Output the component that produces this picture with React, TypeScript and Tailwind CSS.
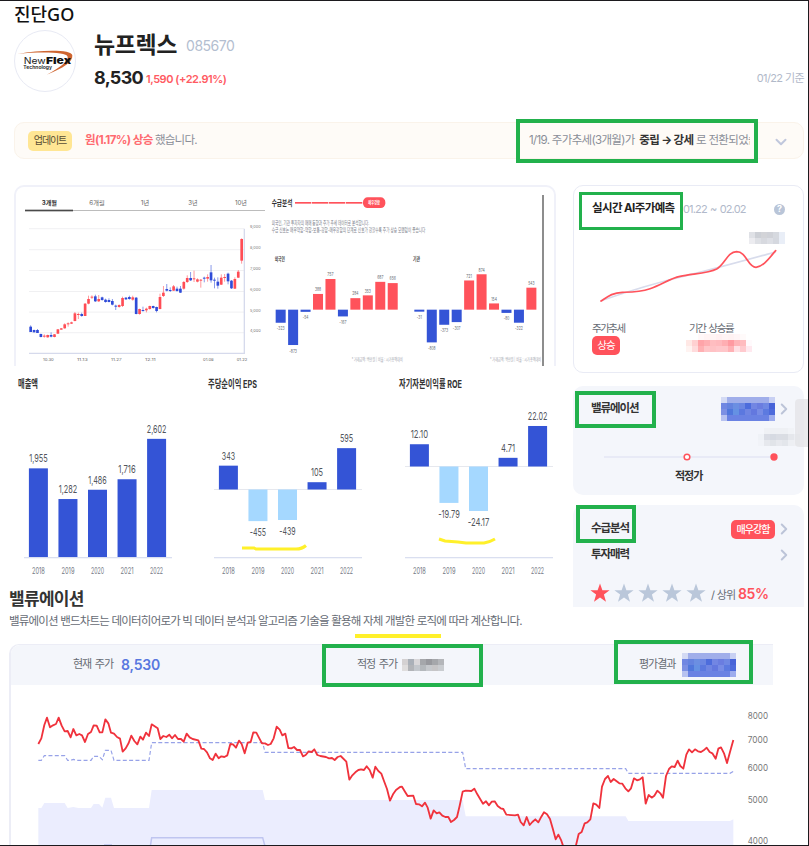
import type { ReactNode } from 'react'
import { ChevronDown, ChevronRight } from 'lucide-react'

const BLUE = '#3454d6'
const RED = '#ff525b'

// [top, bottom, wickTop, wickBottom, up]
const candles: [number, number, number, number, 0 | 1][] = [
  [440, 456, 436, 456, 0], [450, 457, 449, 457, 0], [450, 459, 447, 459, 0], [462, 471, 461, 472, 0],
  [467, 470, 463, 473, 1], [465, 472, 464, 473, 1], [465, 470, 457, 472, 0], [463, 471, 462, 472, 1],
  [448, 461, 447, 462, 1], [445, 449, 444, 449, 1], [433, 445, 430, 446, 1], [430, 432, 427, 440, 1],
  [427, 431, 425, 432, 1], [400, 423, 396, 424, 1], [402, 405, 398, 417, 1], [402, 408, 398, 410, 0],
  [371, 408, 369, 408, 1], [357, 371, 347, 373, 1], [350, 353, 346, 357, 1], [349, 364, 344, 366, 0],
  [357, 364, 345, 366, 1], [352, 360, 350, 362, 0], [359, 366, 356, 368, 0], [360, 366, 355, 367, 0],
  [363, 374, 357, 376, 0], [377, 380, 374, 390, 0], [375, 381, 373, 383, 1], [354, 378, 350, 381, 1],
  [353, 358, 351, 360, 0], [351, 357, 347, 359, 0], [352, 359, 347, 362, 1], [353, 402, 351, 403, 0],
  [387, 402, 386, 404, 1], [390, 393, 380, 395, 0], [386, 391, 383, 397, 1], [378, 387, 377, 389, 1],
  [378, 384, 377, 386, 0], [381, 393, 380, 397, 0], [351, 387, 341, 388, 1], [338, 348, 318, 351, 1],
  [327, 332, 312, 334, 0], [330, 333, 322, 336, 0], [319, 332, 315, 333, 1], [326, 333, 320, 335, 0],
  [326, 338, 318, 339, 0], [306, 326, 303, 329, 1], [294, 306, 286, 309, 1], [294, 301, 276, 303, 0],
  [295, 298, 272, 306, 1], [298, 305, 295, 307, 1], [299, 302, 297, 323, 1], [293, 295, 290, 307, 0],
  [291, 296, 283, 305, 1], [277, 301, 255, 308, 0], [299, 302, 293, 325, 0], [305, 317, 292, 326, 0],
  [293, 314, 283, 315, 1], [291, 293, 282, 305, 1], [281, 304, 278, 313, 0], [302, 325, 300, 327, 0],
  [297, 326, 292, 327, 1], [275, 293, 270, 294, 1], [177, 242, 175, 251, 1],
]

const pricePath =
  '115,177 124,160 133,120 141,98 150,127 159,121 168,117 176,98 185,122 194,139 203,138 212,157 220,132 229,151 238,147 246,151 255,171 264,147 273,141 281,121 290,122 299,142 307,142 316,103 325,115 333,143 342,146 351,156 360,161 368,200 377,190 386,174 394,152 403,168 412,178 421,155 429,164 438,143 447,153 455,118 464,124 473,130 481,162 490,153 499,156 508,149 516,160 525,150 534,162 543,162 551,170 560,146 569,157 578,162 595,166 604,191 612,192 621,202 630,220 638,225 647,206 656,220 664,214 673,216 682,211 691,177 699,178 708,188 717,167 725,177 734,205 743,173 752,171 760,142 769,143 778,160 786,175 795,175 804,180 812,177 821,160 830,125 839,134 847,151 856,146 865,189 874,190 882,186 891,195 900,195 909,214 917,210 926,199 935,201 943,193 952,210 961,213 978,216 987,220 996,219 1004,225 1013,216 1022,213 1039,230 1048,284 1057,271 1066,262 1075,255 1083,253 1092,255 1100,244 1109,255 1118,278 1126,245 1135,258 1144,266 1152,288 1161,312 1170,347 1179,328 1188,315 1200,306 1206,305 1215,320 1223,333 1240,332 1248,357 1257,358 1266,364 1275,353 1283,368 1292,401 1301,376 1310,385 1318,382 1327,392 1336,396 1345,396 1353,411 1362,405 1371,396 1379,362 1388,320 1397,317 1414,318 1423,311 1432,328 1440,341 1449,356 1458,349 1467,361 1475,350 1484,349 1493,363 1502,370 1510,372 1519,389 1545,391 1554,389 1562,411 1571,421 1580,396 1589,420 1597,411 1606,403 1615,412 1624,395 1632,382 1641,388 1650,402 1658,430 1667,463 1675,449 1684,467 1690,485 1727,485 1736,447 1745,441 1754,415 1762,412 1771,403 1780,355 1789,359 1798,369 1806,305 1815,282 1824,273 1832,291 1841,282 1850,289 1858,295 1867,296 1876,310 1885,319 1893,310 1902,280 1911,286 1920,283 1928,277 1937,356 1946,330 1955,338 1963,332 1972,317 1981,325 1989,338 1998,273 2007,252 2015,244 2024,246 2033,227 2041,243 2050,251 2059,209 2067,193 2076,202 2085,193 2094,199 2103,201 2111,196 2120,188 2129,201 2137,205 2147,221 2155,191 2163,187 2172,205 2181,234 2190,201 2200,165'

const fairPath =
  '115,226 124,226 133,212 194,212 203,226 212,226 220,223 229,226 273,226 281,214 297,214 307,224 316,196 333,196 342,226 447,226 455,173 788,173 795,202 1388,202 1397,251 1877,251 1885,265 2190,265 2200,259'

const bandPath =
  '115,369 124,369 133,354 194,354 203,369 220,366 235,369 273,369 281,357 297,357 307,368 316,338 333,338 342,369 447,369 455,315 788,315 795,345 1388,345 1397,394 1877,394 1885,408 2190,408 2200,403 2200,485 115,485'

type LabelProps = { x: number; y: number; w: number; size: number; fill?: string; bold?: boolean; anchor?: 'start' | 'middle'; children: string }

// Chart text squeezed to a fixed width
function Label({ x, y, w, size, fill = '#6b7280', bold, anchor = 'start', children }: LabelProps) {
  return (
    <text
      x={anchor === 'middle' ? x - w / 2 : x}
      y={y + size * 0.36}
      fontSize={size}
      fontWeight={bold ? 700 : 400}
      fill={fill}
      textLength={w}
      lengthAdjust="spacingAndGlyphs"
    >
      {children}
    </text>
  )
}

function numWidth(s: string, unit: number) {
  return [...s].reduce((n, c) => n + (c === '1' ? 0.75 : c === ',' || c === '.' ? 0.45 : c === '-' ? 0.7 : 1) * unit, 0)
}

function Mosaic({ rows }: { rows: string[] }) {
  return (
    <div className="flex flex-col">
      {rows.map((row, i) => (
        <div key={i} className="flex">
          {row.split(' ').map((c, j) => (
            <span key={j} className="h-[6px] w-[6px]" style={{ background: c === '-' ? 'transparent' : `#${c}` }} />
          ))}
        </div>
      ))}
    </div>
  )
}

const verdict = [
  'd3daf4 a0aeea a0aeea a0aeea a0aeea a0aeea a0aeea a0aeea c8d0f3',
  '7087e2 6483df 6b8fe2 6b86e2 4d6cdc 7286e3 6a7de0 6f88e3 4763d8',
  '7c90e3 5077dc 6591e3 5b78df 6f85e2 6378df 778ce5 5c7ae0 4d6adb',
  'b7c2f0 6a82e3 6a82e3 6a82e3 6a82e3 6a82e3 6a82e3 6a82e3 9daced',
]

function Logo() {
  return (
    <div className="flex h-[62px] w-[62px] items-center justify-center rounded-full border border-[#e8eaf4] bg-white">
      <svg width="60" height="60" viewBox="0 0 180 180">
        <path d="M8 69 C80 56 170 55 172 73 C174 93 145 112 95 131 C138 108 160 90 158 77 C154 63 75 62 8 69Z" fill="#cf6530" />
        <text x="26" y="98" fontSize="27" fill="#222" textLength="66" lengthAdjust="spacingAndGlyphs">New</text>
        <text x="93" y="98" fontSize="28" fontWeight="900" fill="#111" textLength="75" lengthAdjust="spacingAndGlyphs">Flex</text>
        <text x="25" y="114" fontSize="13" fontWeight="600" fill="#222" textLength="86" lengthAdjust="spacingAndGlyphs">Technology</text>
      </svg>
    </div>
  )
}

function CandleChart() {
  const tabs: [string, number, number][] = [['3개월', 118, 46], ['6개월', 261, 46], ['1년', 405, 26], ['3년', 549, 28], ['10년', 693, 36]]
  const dates: [string, number][] = [['10.30', 115], ['11.13', 217], ['11.27', 319], ['12.11', 421], ['01.08', 595], ['01.22', 696]]
  return (
    <svg className="shrink-0" width="249" height="179" viewBox="18 21 747 537">
      {tabs.map(([t, x, w], i) => (
        <Label key={t} x={x} y={69} w={w} size={18} bold={i === 0} fill={i === 0 ? '#333' : '#666'} anchor="middle">{t}</Label>
      ))}
      <rect x="45" y="90" width="720" height="3" fill="#bcbcbc" />
      <rect x="45" y="89" width="144" height="5" fill="#4a4a4a" />
      {[146, 209, 271, 334, 396, 458].map((y, i) => (
        <g key={y}>
          <rect x="57" y={y - 1} width="645" height="2.5" fill="#ededf0" />
          <Label x={720} y={y - 5} w={32} size={12} fill="#777">{`${9 - i},000`}</Label>
        </g>
      ))}
      <path d="M57 520H703V146" fill="none" stroke="#d6daec" strokeWidth="4" />
      {candles.map(([top, bot, wt, wb, up], i) => {
        const x = 62 + i * 10.21
        const c = up ? '#ff4d55' : '#2f4bd8'
        return (
          <g key={i} fill={c}>
            <rect x={x - 1.3} y={wt} width="2.6" height={wb - wt} opacity="0.65" />
            <rect x={x - 4} y={top} width="8" height={Math.max(3, bot - top)} />
          </g>
        )
      })}
      {dates.map(([t, x]) => (
        <Label key={t} x={x} y={538} w={32} size={12} fill="#666" anchor="middle">{t}</Label>
      ))}
    </svg>
  )
}

const foreigners = [-323, -873, -54, 388, 757, -167, 284, 353, 687, 656]
const institutions = [-31, -808, -373, -307, 721, 874, 154, -80, -322, 543]

function FlowBars({ x0, data }: { x0: number; data: number[] }) {
  return (
    <>
      {data.map((v, i) => {
        const x = x0 + i * 37.35
        const h = Math.max(6, Math.abs(v) * 0.1215)
        const label = String(v)
        return (
          <g key={i}>
            <rect x={x - 15} y={v > 0 ? 389 - h : 389} width="30" height={h} fill={v > 0 ? RED : BLUE} />
            <Label x={x} y={v > 0 ? 389 - h - 14 : 389 + h + 17} w={numWidth(label, 6.2)} size={16} fill="#6b7078" anchor="middle">{label}</Label>
          </g>
        )
      })}
    </>
  )
}

function SupplyChart() {
  return (
    <svg className="shrink-0" width="289" height="179" viewBox="0 21 867 537">
      <Label x={20} y={69} w={62} size={25} bold fill="#333">수급분석</Label>
      {[90, 141, 192, 243].map((x) => (
        <rect key={x} x={x} y="66" width="49" height="5" fill={RED} />
      ))}
      <rect x="294" y="52" width="67" height="32" rx="14" fill={RED} />
      <Label x={310} y={68} w={35} size={14} bold fill="#fff">매우강함</Label>
      <Label x={20} y={129} w={293} size={18} fill="#7d828c">외국인, 기관 투자자의 매매 동향과 주가 추세 데이터로 분석합니다.</Label>
      <Label x={20} y={149} w={461} size={18} fill="#7d828c">수급 신호는 매우약함-약함-보통-강함-매우강함의 단계로 신호가 강할수록 주가 상승 모멘텀이 좋습니다</Label>
      <Label x={29} y={238} w={31} size={17} bold fill="#444">외국인</Label>
      <Label x={444} y={238} w={21} size={17} bold fill="#444">기관</Label>
      <FlowBars x0={47} data={foreigners} />
      <FlowBars x0={463} data={institutions} />
      <Label x={260} y={539} w={153} size={14} fill="#a0a4ad">* 거래금액: 백만원 | 비율 : 시가총액대비</Label>
      <Label x={675} y={539} w={153} size={14} fill="#a0a4ad">* 거래금액: 백만원 | 비율 : 시가총액대비</Label>
      <rect x="832" y="45" width="4" height="513" fill="#555" />
    </svg>
  )
}

type BarProps = { title: string; titleWidth: number; values: string[]; zero: number; scale: number; mark?: string }

function YearBars({ title, titleWidth, values, zero, scale, mark }: BarProps) {
  return (
    <svg className="shrink-0" width="190.3" height="215" viewBox="0 0 190.3 215">
      <Label x={4} y={14.5} w={titleWidth} size={11} bold fill="#333">{title}</Label>
      {zero < 180 && <rect x="10" y={zero - 0.5} width="148" height="1" fill="#e6e8ee" />}
      {values.map((s, i) => {
        const v = Number(s.replace(',', ''))
        const h = Math.abs(v) * scale
        const x = 24.4 + i * 29.55
        return (
          <g key={i}>
            <rect x={x - 9.5} y={v > 0 ? zero - h : zero} width="19" height={h} fill={v > 0 ? BLUE : '#a5d8ff'} />
            <Label x={x} y={v > 0 ? zero - h - 10 : zero + h + 11} w={numWidth(s, 4.4)} size={11} fill="#53565d" anchor="middle">{s}</Label>
            <Label x={x} y={200.5} w={13} size={8.5} fill="#747985" anchor="middle">{String(2018 + i)}</Label>
          </g>
        )
      })}
      <rect x="10" y="187" width="148" height="1.3" fill="#dadff0" />
      {mark && <path d={mark} fill="none" stroke="#fff02a" strokeWidth="3" />}
    </svg>
  )
}

function Star({ on }: { on?: boolean }) {
  return (
    <svg width="20" height="20" viewBox="0 0 20 20">
      <path d="M10 .4 12.4 7.2H19.6L13.9 11.6 16 18.8 10 14.6 4 18.8 6.1 11.6 .4 7.2H7.6Z" fill={on ? '#ff525b' : '#bac7da'} />
    </svg>
  )
}

function Chevron() {
  return <ChevronRight className="-mr-[5px] shrink-0 text-[#bcc4d8]" size={18} strokeWidth={2.6} />
}

function Forecast() {
  return (
    <section className="flex h-[188px] flex-col rounded-[10px] border border-[#e9ebf5] bg-white px-[18px] pt-[13px]">
      <div className="flex h-5 items-center">
        <h3 className="w-[91px] whitespace-nowrap text-[11.5px] font-bold tracking-[-0.6px] text-[#222]">실시간 AI주가예측</h3>
        <span className="whitespace-nowrap text-[11px] tracking-[-0.85px] [word-spacing:1px] text-[#b1b9ca]">01.22 ~ 02.02</span>
        <span className="ml-auto flex h-[11px] w-[11px] items-center justify-center rounded-full bg-[#b9c5d8] text-[9px] font-bold text-white">?</span>
      </div>
      <div className="mt-[13px] flex justify-end">
        <Mosaic rows={['dfe1e6 cdd0d6 d3d4d8 d0d2d8 d6d9df e9eef7', 'ececf0 dee0e5 d7d9df dddfe5 d5d8df e9eef7']} />
      </div>
      <svg className="-ml-[2px] shrink-0" width="195" height="76" viewBox="75 192 585 228">
        <path d="M108 362 C230 320 300 302 360 288 S500 252 632 216" fill="none" stroke="#d8dcec" strokeWidth="5" />
        <path d="M108 363 C128 350 142 338 172 337 C205 336 225 336 255 326 C290 314 315 295 345 289 C385 281 430 280 455 267 C480 252 487 216 515 215 C545 215 548 262 573 262 C595 260 612 235 632 212" fill="none" stroke="#ff525b" strokeWidth="5" strokeLinecap="round" />
      </svg>
      <div className="flex">
        <div className="w-[96px]">
          <p className="h-4 text-[10.5px] leading-[18px] tracking-[-1.5px] text-[#666b73]">주가추세</p>
          <span className="flex h-[19px] w-[28px] items-center justify-center rounded-[5px] bg-[#ff525b] text-[10.5px] tracking-[-1px] text-white">상승</span>
        </div>
        <div>
          <p className="ml-px h-4 whitespace-nowrap text-[10.5px] leading-[18px] tracking-[-1.3px] [word-spacing:1px] text-[#666b73]">기간 상승률</p>
          <div className="-ml-[2px] -mt-[2px]">
            <Mosaic
              rows={[
                '- - fff8f8 fff4f4 fff4f4 fff0f1 fff4f4 fff2f2 fff5f6 fffafa -',
                'ffe8e5 ffd0d1 ffa4a9 ffaeb2 ffbdc0 ffb9bd ffaeb2 ff9aa1 ffb4b8 ffbcbf fffafc',
                'fff3f1 ffdbdc ffb0b3 ffc5c8 ffc2c5 ffc6ca ffc6c9 ffb1b5 ffe0e4 ffcace ffe9ef',
              ]}
            />
          </div>
        </div>
      </div>
    </section>
  )
}

function Box({ className }: { className: string }) {
  return <div className={`pointer-events-none absolute border-[#22b14c] ${className}`} />
}

function CardTitle({ children }: { children: ReactNode }) {
  return <h3 className="text-[11.5px] font-bold tracking-[-1.1px] text-[#333]">{children}</h3>
}

export default function App() {
  return (
    <div className="relative flex h-[846px] w-[809px] flex-col overflow-hidden border-y border-r border-[#1c1a1e] bg-white font-[family-name:Inter,'Noto_Sans_CJK_KR',sans-serif] text-[#222]">
      <h1 className="h-[27px] pl-[14px] font-[family-name:'Noto_Sans','Noto_Sans_CJK_KR',sans-serif] text-[18px] font-medium leading-[26px] tracking-[0px] text-[#111]">진단GO</h1>

      <header className="mt-[2px] flex h-[62px] shrink-0 pl-[14px] pr-[4px]">
        <Logo />
        <div className="ml-[18px]">
          <div className="flex h-[30px] items-center">
            <h2 className="text-[23px] font-bold tracking-[-0.4px]">뉴프렉스</h2>
            <span className="ml-[9px] text-[14px] tracking-[-0.5px] text-[#b3bed0]">085670</span>
          </div>
          <div className="flex h-[34px] items-center">
            <span className="text-[18px] font-bold tracking-[-0.7px]">8,530</span>
            <span className="ml-[3px] mt-[4px] text-[11px] font-semibold tracking-[-0.45px] text-[#ff5a62]">1,590 (+22.91%)</span>
          </div>
        </div>
        <span className="ml-auto self-end pb-[5px] text-[11px] leading-[17px] tracking-[-0.6px] text-[#b1b9c9]">01/22 기준</span>
      </header>

      {/* Update ticker */}
      <div className="ml-[14px] mt-[30px] flex h-[37px] w-[790px] shrink-0 items-center rounded-[10px] border border-[#faf3ea] bg-[#fefbf7] pl-[13px] pr-[13px] text-[12px] text-[#8a8e98]">
        <span className="flex h-5 w-[44px] items-center justify-center whitespace-nowrap rounded-[5px] bg-[#ffe694] text-[10px] tracking-[-1.1px] text-[#584d33]">업데이트</span>
        <p className="ml-[13px] whitespace-nowrap text-[11.5px] tracking-[-0.8px]">
          <b className="tracking-[-0.6px] text-[#ff6a70]">원(1.17%) 상승</b> 했습니다.
        </p>
        <p className="ml-auto w-[221px] overflow-hidden whitespace-nowrap text-[11.5px] tracking-[-0.67px]">
          1/19. 주가추세(3개월)가 <b className="ml-[2px] text-[#333]">중립 → 강세</b> 로 전환되었습니다.
        </p>
        <ChevronDown className="ml-[22px] mt-[3px] text-[#c0c7dc]" size={18} strokeWidth={2.6} />
      </div>

      <main className="mt-[26px] flex h-[459px] shrink-0">
        <div className="w-[563px]">
          <div className="ml-[14px] flex h-[181px] w-[542px] overflow-hidden rounded-t-[10px] border-x-2 border-t-2 border-[#f0f1f9]">
            <CandleChart />
            <SupplyChart />
          </div>
          <div className="ml-[14px] mt-[4px] flex h-[215px]">
            <YearBars title="매출액" titleWidth={20} values={['1,955', '1,282', '1,486', '1,716', '2,602']} zero={187.5} scale={0.0456} />
            <YearBars title="주당순이익 EPS" titleWidth={49} values={['343', '-455', '-439', '105', '595']} zero={119.5} scale={0.0695} mark="M38 178H50L52 179H92Q98 179 102 175.5" />
            <YearBars title="자기자본이익률 ROE" titleWidth={63} values={['12.10', '-19.79', '-24.17', '4.71', '22.02']} zero={96.5} scale={1.84} mark="M44 169L50 171 63 172 71 173H89Q95 172 100 169" />
          </div>
          <h2 className="ml-[9px] h-[26px] text-[17px] font-bold leading-[28px] tracking-[-0.7px] text-[#333]">밸류에이션</h2>
          <p className="ml-[9px] h-[18px] whitespace-nowrap text-[11.5px] leading-[20px] tracking-[-0.81px] text-[#666b74]">
            밸류에이션 밴드차트는 데이터히어로가 빅 데이터 분석과 알고리즘 기술을 활용해 자체 개발한 로직에 따라 계산합니다.
          </p>
        </div>

        <aside className="ml-[10px] w-[231px]">
          <Forecast />
          <section className="mt-[13px] h-[109px] rounded-[10px] bg-[#f4f6fb] pl-[18px] pr-[16px] pt-[11px]">
            <div className="flex h-6 items-center">
              <CardTitle>밸류에이션</CardTitle>
              <div className="ml-auto"><Mosaic rows={verdict} /></div>
              <Chevron />
            </div>
            <div className="-mr-[12px] mt-[7px] flex justify-end">
              <Mosaic rows={['- eff1f5 eef0f4 eef0f4 eef0f4 f1f3f7 -', 'eff2f7 dadde5 d6dae2 dadde4 dadde3 e5e7ec eceef3', 'f1f3f8 e6e8ed e1e4e9 e7e9ee e3e6eb edeff3 eff0f4']} />
            </div>
            <svg className="ml-[8px] mt-[5px]" width="180" height="12" viewBox="103 228 540 36">
              <rect x="118" y="244" width="510" height="4" fill="#e1e5f4" />
              <circle cx="367" cy="246" r="8.5" fill="#fff" stroke="#ff525b" strokeWidth="4.5" />
              <circle cx="628" cy="246" r="11" fill="#ff525b" />
            </svg>
            <p className="ml-[84px] mt-[3px] text-[11px] font-bold leading-[20px] tracking-[-1px] text-[#333]">적정가</p>
          </section>
          <section className="mt-[10px] h-[102px] rounded-t-[10px] bg-[#f4f6fb] pl-[18px] pr-[16px] pt-[11px]">
            <div className="flex h-[26px] items-center">
              <CardTitle>수급분석</CardTitle>
              <span className="ml-auto flex h-[19px] w-[44px] items-center justify-center whitespace-nowrap rounded-[5px] bg-[#ff525b] text-[10px] font-medium tracking-[-1px] text-white">매우강함</span>
              <Chevron />
            </div>
            <div className="flex h-[26px] items-center justify-between">
              <CardTitle>투자매력</CardTitle>
              <Chevron />
            </div>
            <div className="-ml-px mt-[15px] flex h-5 items-center gap-[4px]">
              <Star on />
              <Star />
              <Star />
              <Star />
              <Star />
              <span className="ml-px whitespace-nowrap text-[11px] tracking-[-0.7px] text-[#666b75]">/ 상위 <b className="text-[14px] font-semibold tracking-[-0.3px] text-[#ff525b]">85%</b></span>
            </div>
          </section>
        </aside>
      </main>

      <section className="ml-[9px] w-[764px] rounded-tl-[10px] border-l-2 border-t border-[#ecedf6]">
        <div className="flex h-[40px] items-center overflow-hidden rounded-tl-[9px] bg-[#f4f6fb] pb-px text-[11px] tracking-[-1px] [word-spacing:1.5px] text-[#666b73]">
          <div className="ml-[62px] flex w-[284px] items-center gap-[8px]">
            현재 주가 <b className="text-[14px] font-semibold tracking-[-0.2px] text-[#5877df]">8,530</b>
          </div>
          <div className="flex w-[282px] items-center">
            <span className="w-[45px]">적정 주가</span>
            <Mosaic rows={['d4d1d2 aab0b8 d9d7d9 a5a7ab 98999e a5a7ab b4b6ba', 'dfdddd b2b4b8 c3c7cc b4b8bc c5c8cc c6c5c7 c9ccd0']} />
          </div>
          <div className="flex items-center">
            <span className="w-[43px]">평가결과</span>
            <Mosaic rows={verdict} />
          </div>
        </div>
        <svg className="block" width="762" height="160" viewBox="33 0 2286 480">
          <polygon points={bandPath} fill="#ebedfe" />
          <path d="M451 484 455 458H788L795 484M312 480H336" fill="none" stroke="#bfc5f0" strokeWidth="4.5" />
          <polyline points={fairPath} fill="none" stroke="#97a2e8" strokeWidth="3.5" strokeDasharray="12 7" />
          <polyline points={pricePath} fill="none" stroke="#f0323c" strokeWidth="5.5" strokeLinejoin="round" />
          {[93, 165, 247, 345, 467].map((y, i) => (
            <Label key={y} x={2243} y={y} w={61} size={27} fill="#777">{String(8000 - i * 1000)}</Label>
          ))}
        </svg>
      </section>

      {/* Side handle and marker annotations */}
      <div className="absolute left-[795px] top-[398px] h-[48px] w-[13px] rounded-l-[4px] bg-[#e2e3e6]/70" />
      <div className="absolute left-[355px] top-[633px] h-[4px] w-[86px] bg-[#fff02a]" />
      <Box className="left-[516px] top-[118px] h-[44px] w-[242px] border-4" />
      <Box className="left-[579px] top-[191px] h-[38px] w-[104px] border-3" />
      <Box className="left-[575px] top-[390px] h-[37px] w-[81px] border-4" />
      <Box className="left-[576px] top-[504px] h-[38px] w-[60px] border-4" />
      <Box className="left-[322px] top-[643px] h-[43px] w-[161px] border-4" />
      <Box className="left-[614px] top-[639px] h-[44px] w-[139px] border-4" />
    </div>
  )
}
